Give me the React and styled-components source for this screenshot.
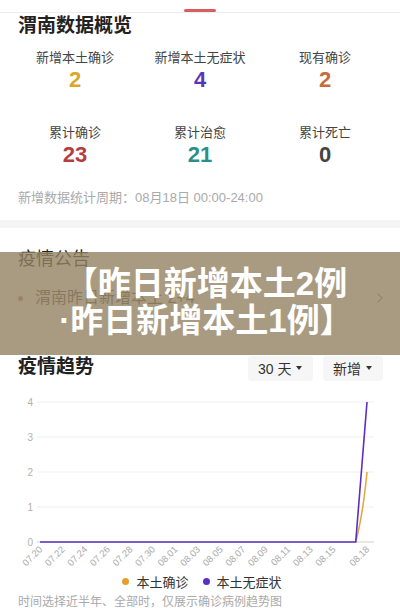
import React from "react";
import styled, { createGlobalStyle } from "styled-components";

const GlobalStyle = createGlobalStyle`
  html, body {
    margin: 0;
    padding: 0;
    background: #fff;
  }
  body {
    font-family: "Liberation Sans", "Noto Sans CJK SC", sans-serif;
    overflow: hidden;
  }
`;

const Page = styled.div`
  position: relative;
  width: 400px;
  height: 608px;
  overflow: hidden;
  background: #fff;
  color: #333;
`;

const TabStrip = styled.div`
  height: 12px;
  border-bottom: 1px solid #ededed;
  display: flex;
  justify-content: center;
  align-items: flex-end;
`;

const TabMark = styled.div`
  width: 32px;
  height: 3px;
  border-radius: 2px;
  background: #d95c62;
`;

const Overview = styled.section`
  padding: 1px 0 14px;
`;

const SectionTitle = styled.h2`
  margin: 0;
  padding: 0 18px;
  font-size: ${(p) => (p.$bold ? 19 : 18)}px;
  line-height: 24px;
  font-weight: ${(p) => (p.$bold ? 700 : 400)};
  color: #222;
`;

const StatGrid = styled.div`
  display: grid;
  grid-template-columns: repeat(3, 125px);
  justify-content: center;
  row-gap: 31px;
  margin-top: 11px;
`;

const Stat = styled.div`
  display: flex;
  flex-direction: column;
  align-items: center;
`;

const StatLabel = styled.div`
  font-size: 13px;
  line-height: 18px;
  color: #444;
`;

const StatValue = styled.div`
  font-size: 22px;
  line-height: 26px;
  font-weight: 700;
  color: ${(p) => p.$color};
`;

const Note = styled.div`
  padding: 0 18px;
  margin-top: ${(p) => p.$top || 0}px;
  font-size: ${(p) => p.$size || 12}px;
  line-height: 17px;
  color: #aaa;
`;

const Band = styled.div`
  height: 8px;
  background: #f5f5f5;
`;

const Notice = styled.section`
  padding: 19px 0 45px;
`;

const NoticeRow = styled.div`
  display: flex;
  align-items: center;
  margin-top: 16px;
  padding: 0 16px 0 18px;
  font-size: 16px;
  line-height: 22px;
  color: #555;
`;

const Dot = styled.span`
  width: ${(p) => p.$size || 5}px;
  height: ${(p) => p.$size || 5}px;
  border-radius: 50%;
  background: ${(p) => p.$color};
  flex: none;
`;

const NoticeText = styled.span`
  flex: 1;
  margin-left: 12px;
`;

const Trend = styled.section``;

const TrendHead = styled.div`
  display: flex;
  align-items: center;
  justify-content: space-between;
  height: 26px;
  padding-right: 17px;
`;

const Selects = styled.div`
  display: flex;
  gap: 10px;
  padding-top: 2px;
`;

const Select = styled.div`
  display: flex;
  align-items: center;
  justify-content: space-between;
  box-sizing: border-box;
  width: ${(p) => p.$w}px;
  height: 25px;
  padding: 0 11px 0 10px;
  border-radius: 4px;
  background: #f6f6f6;
  font-size: 14px;
  color: #333;
`;

const Caret = styled.span`
  width: 0;
  height: 0;
  border-left: 3px solid transparent;
  border-right: 3px solid transparent;
  border-top: 4px solid #333;
`;

const Chart = styled.svg`
  display: block;
  margin-top: 4px;
`;

const Legend = styled.div`
  display: flex;
  justify-content: center;
  align-items: center;
  gap: 14px;
  height: 18px;
  padding-left: 4px;
  font-size: 13px;
  color: #333;
`;

const LegendItem = styled.div`
  display: flex;
  align-items: center;
  gap: 7px;
`;

const Banner = styled.div`
  position: absolute;
  left: 0;
  right: 0;
  top: 252px;
  height: 103px;
  box-sizing: border-box;
  padding: 0 0 4px 12px;
  display: flex;
  flex-direction: column;
  align-items: center;
  justify-content: center;
  background: rgba(148, 130, 98, 0.8);
  color: #fff;
  font-family: "Liberation Sans", "Noto Sans CJK SC", sans-serif;
  font-size: 33px;
  line-height: 37px;
  font-weight: 700;
`;

const stats = [
  { label: "新增本土确诊", value: "2", color: "#d9a62b" },
  { label: "新增本土无症状", value: "4", color: "#5a35b8" },
  { label: "现有确诊", value: "2", color: "#c86a3c" },
  { label: "累计确诊", value: "23", color: "#b63d3f" },
  { label: "累计治愈", value: "21", color: "#2a8f8b" },
  { label: "累计死亡", value: "0", color: "#444" },
];

const dates = [];
for (let d = 20; d <= 31; d++) dates.push(`07.${d}`);
for (let d = 1; d <= 18; d++) dates.push(`08.${String(d).padStart(2, "0")}`);

const X0 = 40;
const STEP = 327 / 29;
const yOf = (v) => 158 - v * 35;

function TrendChart() {
  const xs = dates.map((_, i) => X0 + i * STEP);
  const shown = dates.map((_, i) => i).filter((i) => (i % 2 === 0 && i <= 26) || i === 29);
  const purple = xs.map((x, i) => `${x},${yOf(i === 29 ? 4 : 0)}`).join(" ");
  return (
    <Chart width="400" height="188" viewBox="0 0 400 188">
      {[0, 1, 2, 3, 4].map((v) => (
        <g key={v}>
          <line x1="37" x2="374" y1={yOf(v)} y2={yOf(v)} stroke={v === 0 ? "#cfcfcf" : "#efefef"} strokeWidth="1" />
          <text x="33" y={yOf(v) + 3.5} fontSize="10" fill="#b0b0b0" textAnchor="end" fontFamily="Liberation Sans, sans-serif">
            {v}
          </text>
        </g>
      ))}
      <path d={`M${xs[28]} 158 Q ${xs[28] + 7} 132 ${xs[29]} ${yOf(2)}`} fill="none" stroke="#e6a53a" strokeWidth="1.5" />
      <polyline points={purple} fill="none" stroke="#5a2fc2" strokeWidth="1.6" />
      {shown.map((i) => (
        <text
          key={i}
          x={xs[i] + 3}
          y="166"
          fontSize="9.5"
          fill="#aaa"
          textAnchor="end"
          fontFamily="Liberation Sans, sans-serif"
          transform={`rotate(-45 ${xs[i] + 3} 166)`}
        >
          {dates[i]}
        </text>
      ))}
    </Chart>
  );
}

export default function App() {
  return (
    <Page>
      <GlobalStyle />
      <TabStrip>
        <TabMark />
      </TabStrip>

      <Overview>
        <SectionTitle $bold>渭南数据概览</SectionTitle>
        <StatGrid>
          {stats.map((s) => (
            <Stat key={s.label}>
              <StatLabel>{s.label}</StatLabel>
              <StatValue $color={s.color}>{s.value}</StatValue>
            </Stat>
          ))}
        </StatGrid>
        <Note $top={21} $size={13}>新增数据统计周期：08月18日 00:00-24:00</Note>
      </Overview>

      <Band />

      <Notice>
        <SectionTitle>疫情公告</SectionTitle>
        <NoticeRow>
          <Dot $color="#d0796e" />
          <NoticeText>渭南昨日新增本土 2+4</NoticeText>
          <svg width="8" height="12" viewBox="0 0 8 12">
            <polyline points="1.5,1.5 6,6 1.5,10.5" fill="none" stroke="#999" strokeWidth="1.3" />
          </svg>
        </NoticeRow>
      </Notice>

      <Trend>
        <TrendHead>
          <SectionTitle $bold>疫情趋势</SectionTitle>
          <Selects>
            <Select $w={65}>
              30 天 <Caret />
            </Select>
            <Select $w={60}>
              新增 <Caret />
            </Select>
          </Selects>
        </TrendHead>
        <TrendChart />
        <Legend>
          <LegendItem>
            <Dot $size={7} $color="#e3a12c" />
            本土确诊
          </LegendItem>
          <LegendItem>
            <Dot $size={7} $color="#5a2fc2" />
            本土无症状
          </LegendItem>
        </Legend>
        <Note $top={4}>时间选择近半年、全部时，仅展示确诊病例趋势图</Note>
      </Trend>

      <Banner>
        <div>【昨日新增本土2例</div>
        <div>·昨日新增本土1例】</div>
      </Banner>
    </Page>
  );
}
